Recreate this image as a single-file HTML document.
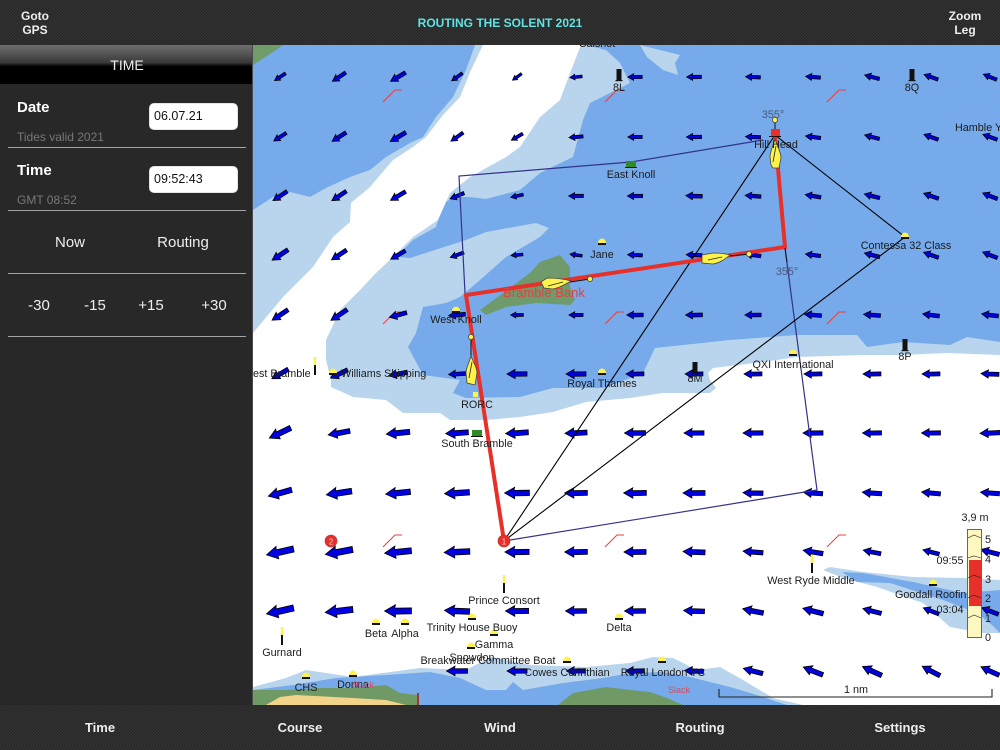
<!DOCTYPE html>
<html><head><meta charset="utf-8"><title>Routing the Solent 2021</title>
<style>
html,body{margin:0;padding:0;background:#262626}
body{width:1000px;height:750px;position:relative;overflow:hidden;font-family:"Liberation Sans",sans-serif;color:#fff}
.bar{position:absolute;left:0;width:1000px;background-color:#2c2c2c;background-image:conic-gradient(#272727 25%,#333 0 50%,#272727 0 75%,#333 0);background-size:3px 3px}
.t{position:absolute;white-space:nowrap;transform:translateX(-50%);text-align:center}
.b{font-weight:bold;font-size:12px;line-height:14px;color:#eee}
.n{font-weight:bold;font-size:13px;line-height:15px;color:#eee;top:720px}
.l{position:absolute;white-space:nowrap}
.hr{position:absolute;left:8px;width:238px;height:1px;background:#a5a5a5}
.inp{position:absolute;left:149px;width:89px;height:27px;background:#fff;border-radius:5px;box-shadow:inset 0 0 1px #555;color:#111;font-size:12.5px;line-height:27px;text-indent:5px}
.big{font-size:15px;line-height:18px;color:#eee}
svg{position:absolute;left:243px;top:35px;filter:blur(.3px)}
svg text{font-family:"Liberation Sans",sans-serif;font-size:10.8px;fill:#1c1c1c}
.m{text-anchor:middle}
</style></head><body>

<svg width="767" height="680" viewBox="243 35 767 680">
<defs>
<path id="a" d="M-10.5 0L-2 -4.8L-2.6 -2.2L10.5 -2.4L10.5 2.2L-2 2.4L-2 4.8Z" fill="#0000e0" stroke="#000" stroke-width=".8" vector-effect="non-scaling-stroke"/>
<g id="d"><path d="M-4 0A4 4.5 0 0 1 4 0Z" fill="#fdf34a"/><rect x="-4" y="0" width="8" height="2" fill="#111"/></g>
<g id="k"><rect x="-2.5" y="-7" width="5" height="11" fill="#111"/><rect x="-3.5" y="4" width="7" height="1.2" fill="#111"/></g>
<path id="w" d="M0 0L12 -12L19 -12" fill="none" stroke="#e8403c" stroke-width="1"/>
<g id="p"><rect x="-1.2" y="-10" width="2.4" height="8" fill="#fdf34a"/><rect x="-1" y="-2" width="2" height="10" fill="#111"/></g>
</defs>
<rect x="243" y="35" width="767" height="680" fill="#76aaea"/>
<path fill="#b9d5ee" d="M479 35L475 45L466 70L453 97L436 117L423 137L410 143L386 157L370 170L350 177L326 188L310 197L290 192L273 197L253 210L243 216L243 430L1010 430L1010 343L1000 342L967 337L950 345L903 342L867 347L857 335L797 335L730 340L655 348L643 373L633 377L603 388L553 388L520 397L466 398L453 393L460 380L423 375L408 347L416 333L423 307L446 303L460 297L480 280L506 257L540 237L549 228L536 223L486 232L466 240L410 258L396 257L413 240L436 227L443 203L456 197L470 197L486 199L520 190L540 173L573 157L583 120L590 103L630 83L620 63L606 50L586 45L575 35Z"/>
<path fill="#b9d5ee" d="M636 35L640 45L680 55L675 63L678 75L663 70L647 57L640 45L680 35Z"/>
<path fill="#fff" d="M488 35L483 45L471 70L460 97L443 115L426 137L413 147L393 160L370 187L351 203L350 222L333 237L313 267L283 297L253 333L243 345L243 715L1010 715L1010 355L1000 355L947 353L903 355L863 355L797 357L763 362L713 368L708 373L710 380L716 388L710 393L663 393L630 398L586 402L553 412L520 417L486 420L450 420L440 413L403 413L386 400L353 397L331 387L331 380L326 360L326 340L340 310L360 290L376 273L393 257L413 237L438 220L450 193L470 177L506 157L520 147L540 117L560 100L570 73L581 45L585 35Z"/>
<path fill="#6f9c68" d="M243 70L253 65L273 52L283 45L295 35L243 35Z"/>
<path fill="#6e9a6c" d="M480 310L503 293L530 273L540 262L560 255L570 267L570 287L575 300L570 305L536 303L506 307L486 315Z"/>
<path fill="#b9d5ee" d="M823 570L830 567L863 572L913 577L963 578L1000 580L1010 580L1010 636L1000 633L983 633L950 627L923 603L877 587L843 578Z"/>
<path fill="#76aaea" d="M842 572L863 573L913 582L963 593L1000 590L1010 590L1010 640L1000 633L992 625L977 613L943 600L890 583L857 582Z"/>
<path fill="#b9d5ee" d="M243 690L253 687L286 678L306 670L353 677L420 668L466 670L491 657L530 665L586 667L630 663L653 657L673 658L697 670L720 667L743 680L773 698L803 705L830 715L243 715Z"/>
<path fill="#76aaea" d="M243 692L253 690L293 685L336 678L386 675L430 672L460 678L486 690L506 690L513 682L523 690L563 683L603 678L630 673L663 672L690 677L730 687L757 695L787 705L810 715L243 715Z"/>
<path fill="#6f9a66" d="M243 690L286 690L320 688L353 688L386 685L400 693L418 695L418 715L243 715Z"/>
<path fill="#6f9a66" d="M550 715L558 705L573 693L606 687L630 690L650 692L667 698L683 705L700 715Z"/>
<path fill="#f2d38a" d="M255 715L266 705L280 697L296 695L353 698L386 700L406 705L415 715Z"/>

<text x="597" y="47" class="m">Calshot</text>

<use href="#w" x="383" y="102"/><use href="#w" x="605" y="102"/><use href="#w" x="827" y="102"/>
<use href="#w" x="383" y="324"/><use href="#w" x="605" y="324"/><use href="#w" x="827" y="324"/>
<use href="#w" x="383" y="547"/><use href="#w" x="605" y="547"/><use href="#w" x="827" y="547"/>

<g>
<use href="#a" transform="translate(280 77) rotate(-33) scale(.62)"/><use href="#a" transform="translate(339 77) rotate(-33) scale(.75)"/><use href="#a" transform="translate(398 77) rotate(-30) scale(.82)"/><use href="#a" transform="translate(457 77) rotate(-35) scale(.62)"/><use href="#a" transform="translate(517 77) rotate(-35) scale(.52)"/><use href="#a" transform="translate(576 77) rotate(-5) scale(.58)"/><use href="#a" transform="translate(635 77) scale(.68)"/><use href="#a" transform="translate(694 77) scale(.7)"/><use href="#a" transform="translate(753 77) rotate(3) scale(.7)"/><use href="#a" transform="translate(813 77) rotate(5) scale(.7)"/><use href="#a" transform="translate(872 77) rotate(15) scale(.72)"/><use href="#a" transform="translate(931 77) rotate(20) scale(.7)"/><use href="#a" transform="translate(990 77) rotate(22) scale(.68)"/>
<use href="#a" transform="translate(280 137) rotate(-32) scale(.7)"/><use href="#a" transform="translate(339 137) rotate(-32) scale(.78)"/><use href="#a" transform="translate(398 137) rotate(-30) scale(.85)"/><use href="#a" transform="translate(457 137) rotate(-35) scale(.7)"/><use href="#a" transform="translate(517 137) rotate(-30) scale(.62)"/><use href="#a" transform="translate(576 137) rotate(-5) scale(.67)"/><use href="#a" transform="translate(635 137) scale(.68)"/><use href="#a" transform="translate(694 137) scale(.72)"/><use href="#a" transform="translate(753 137) rotate(3) scale(.72)"/><use href="#a" transform="translate(813 137) rotate(8) scale(.72)"/><use href="#a" transform="translate(872 137) rotate(15) scale(.72)"/><use href="#a" transform="translate(931 137) rotate(20) scale(.72)"/><use href="#a" transform="translate(990 137) rotate(20) scale(.72)"/>
<use href="#a" transform="translate(280 196) rotate(-33) scale(.8)"/><use href="#a" transform="translate(339 196) rotate(-33) scale(.82)"/><use href="#a" transform="translate(398 196) rotate(-30) scale(.82)"/><use href="#a" transform="translate(457 196) rotate(-22) scale(.72)"/><use href="#a" transform="translate(517 196) rotate(-12) scale(.6)"/><use href="#a" transform="translate(576 196) scale(.7)"/><use href="#a" transform="translate(635 196) scale(.72)"/><use href="#a" transform="translate(694 196) rotate(3) scale(.78)"/><use href="#a" transform="translate(753 196) rotate(5) scale(.75)"/><use href="#a" transform="translate(813 196) rotate(10) scale(.75)"/><use href="#a" transform="translate(872 196) rotate(15) scale(.75)"/><use href="#a" transform="translate(931 196) rotate(20) scale(.75)"/><use href="#a" transform="translate(990 196) rotate(22) scale(.75)"/>
<use href="#a" transform="translate(280 255) rotate(-33) scale(.9)"/><use href="#a" transform="translate(339 255) rotate(-33) scale(.85)"/><use href="#a" transform="translate(398 255) rotate(-30) scale(.8)"/><use href="#a" transform="translate(457 255) rotate(-20) scale(.68)"/><use href="#a" transform="translate(517 255) rotate(-5) scale(.56)"/><use href="#a" transform="translate(576 255) rotate(8) scale(.58)"/><use href="#a" transform="translate(635 255) rotate(3) scale(.7)"/><use href="#a" transform="translate(694 255) rotate(3) scale(.75)"/><use href="#a" transform="translate(753 255) rotate(8) scale(.75)"/><use href="#a" transform="translate(813 255) rotate(8) scale(.72)"/><use href="#a" transform="translate(872 255) rotate(15) scale(.75)"/><use href="#a" transform="translate(931 255) rotate(20) scale(.75)"/><use href="#a" transform="translate(990 255) rotate(22) scale(.75)"/>
<use href="#a" transform="translate(280 315) rotate(-33) scale(.9)"/><use href="#a" transform="translate(339 315) rotate(-33) scale(.92)"/><use href="#a" transform="translate(398 315) rotate(-15) scale(.85)"/><use href="#a" transform="translate(457 315) rotate(-5) scale(.8)"/><use href="#a" transform="translate(517 315) scale(.6)"/><use href="#a" transform="translate(576 315) scale(.67)"/><use href="#a" transform="translate(635 315) scale(.78)"/><use href="#a" transform="translate(694 315) scale(.8)"/><use href="#a" transform="translate(753 315) scale(.77)"/><use href="#a" transform="translate(813 315) rotate(5) scale(.8)"/><use href="#a" transform="translate(872 315) rotate(5) scale(.8)"/><use href="#a" transform="translate(931 315) rotate(8) scale(.8)"/><use href="#a" transform="translate(990 315) rotate(8) scale(.8)"/>
<use href="#a" transform="translate(280 374) rotate(-30) scale(.9)"/><use href="#a" transform="translate(339 374) rotate(-25) scale(.9)"/><use href="#a" transform="translate(398 374) rotate(-10) scale(.9)"/><use href="#a" transform="translate(457 374) rotate(-3) scale(.8)"/><use href="#a" transform="translate(517 374) scale(.95)"/><use href="#a" transform="translate(576 374) scale(.95)"/><use href="#a" transform="translate(635 374) scale(.85)"/><use href="#a" transform="translate(694 374) scale(.85)"/><use href="#a" transform="translate(753 374) scale(.85)"/><use href="#a" transform="translate(813 374) scale(.85)"/><use href="#a" transform="translate(872 374) scale(.85)"/><use href="#a" transform="translate(931 374) scale(.85)"/><use href="#a" transform="translate(990 374) rotate(3) scale(.85)"/>
<use href="#a" transform="translate(280 433) rotate(-25) scale(1.12)"/><use href="#a" transform="translate(339 433) rotate(-10) scale(1.05)"/><use href="#a" transform="translate(398 433) rotate(-5) scale(1.12)"/><use href="#a" transform="translate(457 433) rotate(-3) scale(1.08)"/><use href="#a" transform="translate(517 433) rotate(-3) scale(1.08)"/><use href="#a" transform="translate(576 433) rotate(-2) scale(1.05)"/><use href="#a" transform="translate(635 433) scale(1)"/><use href="#a" transform="translate(694 433) scale(.95)"/><use href="#a" transform="translate(753 433) scale(.95)"/><use href="#a" transform="translate(813 433) scale(.95)"/><use href="#a" transform="translate(872 433) scale(.9)"/><use href="#a" transform="translate(931 433) scale(.9)"/><use href="#a" transform="translate(990 433) rotate(-2) scale(.95)"/>
<use href="#a" transform="translate(280 493) rotate(-15) scale(1.15)"/><use href="#a" transform="translate(339 493) rotate(-8) scale(1.22)"/><use href="#a" transform="translate(398 493) rotate(-5) scale(1.18)"/><use href="#a" transform="translate(457 493) rotate(-3) scale(1.18)"/><use href="#a" transform="translate(517 493) scale(1.18)"/><use href="#a" transform="translate(576 493) scale(1.08)"/><use href="#a" transform="translate(635 493) scale(1.08)"/><use href="#a" transform="translate(694 493) scale(1.05)"/><use href="#a" transform="translate(753 493) rotate(2) scale(.95)"/><use href="#a" transform="translate(813 493) rotate(5) scale(.92)"/><use href="#a" transform="translate(872 493) rotate(5) scale(.92)"/><use href="#a" transform="translate(931 493) rotate(6) scale(.9)"/><use href="#a" transform="translate(990 493) rotate(5) scale(.9)"/>
<use href="#a" transform="translate(280 552) rotate(-12) scale(1.32)"/><use href="#a" transform="translate(339 552) rotate(-10) scale(1.32)"/><use href="#a" transform="translate(398 552) rotate(-5) scale(1.28)"/><use href="#a" transform="translate(457 552) rotate(-2) scale(1.22)"/><use href="#a" transform="translate(517 552) scale(1.15)"/><use href="#a" transform="translate(576 552) scale(1.08)"/><use href="#a" transform="translate(635 552) scale(1.05)"/><use href="#a" transform="translate(694 552) rotate(3) scale(1.05)"/><use href="#a" transform="translate(753 552) rotate(5) scale(.95)"/><use href="#a" transform="translate(813 552) rotate(10) scale(.95)"/><use href="#a" transform="translate(872 552) rotate(12) scale(.85)"/><use href="#a" transform="translate(931 552) rotate(15) scale(.8)"/><use href="#a" transform="translate(990 552) rotate(15) scale(.9)"/>
<use href="#a" transform="translate(280 611) rotate(-12) scale(1.32)"/><use href="#a" transform="translate(339 611) rotate(-6) scale(1.32)"/><use href="#a" transform="translate(398 611) scale(1.28)"/><use href="#a" transform="translate(457 611) rotate(3) scale(1.2)"/><use href="#a" transform="translate(517 611) scale(1.1)"/><use href="#a" transform="translate(576 611) scale(1)"/><use href="#a" transform="translate(635 611) scale(1)"/><use href="#a" transform="translate(694 611) rotate(3) scale(1)"/><use href="#a" transform="translate(753 611) rotate(12) scale(1)"/><use href="#a" transform="translate(813 611) rotate(15) scale(1)"/><use href="#a" transform="translate(872 611) rotate(15) scale(.9)"/><use href="#a" transform="translate(931 611) rotate(22) scale(.8)"/><use href="#a" transform="translate(990 611) rotate(22) scale(.85)"/>
<use href="#a" transform="translate(457 671) scale(1)"/><use href="#a" transform="translate(517 671) scale(.95)"/><use href="#a" transform="translate(576 671) scale(.9)"/><use href="#a" transform="translate(635 671) scale(.9)"/><use href="#a" transform="translate(694 671) rotate(3) scale(.9)"/><use href="#a" transform="translate(753 671) rotate(15) scale(.95)"/><use href="#a" transform="translate(813 671) rotate(22) scale(1)"/><use href="#a" transform="translate(872 671) rotate(25) scale(1)"/><use href="#a" transform="translate(931 671) rotate(28) scale(.95)"/><use href="#a" transform="translate(990 671) rotate(25) scale(.95)"/>
</g>

<path d="M763 140L631 162L459 176L465 293M785 248L817 490L504 541" fill="none" stroke="#33338a" stroke-width="1.2"/>
<path d="M504 541L775 135L905 237L504 541" fill="none" stroke="#000" stroke-width="1.1"/>
<path d="M504 541L466 295L785 247L775 135" fill="none" stroke="#e8302a" stroke-width="4" stroke-linejoin="miter"/>
<path d="M775 120V135M730 256L749 254M570 282L590 279M471 337L471 360M785 248L787 262" stroke="#111" stroke-width="1" fill="none"/>

<use href="#d" x="602" y="243"/><use href="#d" x="456" y="311"/><use href="#d" x="333" y="373"/><use href="#d" x="602" y="373"/><use href="#d" x="793" y="354"/><use href="#d" x="905" y="237"/><use href="#d" x="376" y="623"/><use href="#d" x="405" y="623"/><use href="#d" x="472" y="618"/><use href="#d" x="494" y="634"/><use href="#d" x="471" y="647"/><use href="#d" x="619" y="618"/><use href="#d" x="567" y="661"/><use href="#d" x="662" y="661"/><use href="#d" x="306" y="677"/><use href="#d" x="353" y="675"/><use href="#d" x="933" y="584"/>
<use href="#k" x="619" y="76"/><use href="#k" x="912" y="76"/><use href="#k" x="905" y="346"/><use href="#k" x="695" y="369"/>
<rect x="626" y="161" width="10" height="7" fill="#2f8a2a"/><rect x="625" y="167" width="12" height="1" fill="#111"/>
<rect x="472" y="430" width="10" height="7" fill="#2f8a2a"/><rect x="471" y="436" width="12" height="1" fill="#111"/>
<rect x="771" y="129" width="9" height="7" fill="#e8302a"/><rect x="769" y="136" width="12" height="1" fill="#111"/>
<rect x="473" y="392" width="5" height="5" fill="#fdf34a"/>
<use href="#p" x="504" y="585"/><use href="#p" x="282" y="637"/><use href="#p" x="315" y="367"/><use href="#p" x="812" y="565"/>
<rect x="417" y="693" width="2" height="12" fill="#a33"/>

<g fill="#fdf34a" stroke="#444" stroke-width=".8">
<path d="M775 139C773 146 770 152 770 157L771 165L773 168L779 168L781 158C781 152 777 146 775 139Z"/>
<path d="M730 255C724 253 718 253 713 253L702 255L702 263L713 264C720 263 725 259 730 255Z"/>
<path d="M571 281C564 279 556 278 547 278L541 282L544 288L553 289C559 288 566 284 571 281Z"/>
<path d="M471 356C469 363 466 368 466 373L467 383L475 385L477 373C477 367 473 362 471 356Z"/>
<circle cx="775" cy="120" r="2.6"/><circle cx="749" cy="254" r="2.6"/><circle cx="590" cy="279" r="2.6"/><circle cx="471" cy="337" r="2.6"/>
</g>
<path d="M776 146L773 162M708 260L722 257M548 286L563 282M472 362L469 378" stroke="#222" stroke-width=".8"/>

<circle cx="504" cy="541" r="6" fill="#e8302a" stroke="#a33" stroke-width=".6"/><circle cx="331" cy="541" r="6" fill="#e8302a" stroke="#a33" stroke-width=".6"/>
<text x="504" y="544.5" class="m" style="font-size:8px;fill:#fcc">1</text><text x="331" y="544.5" class="m" style="font-size:8px;fill:#fcc">2</text>

<text x="619" y="91" class="m">8L</text><text x="912" y="91" class="m">8Q</text>
<text x="955" y="131">Hamble Yacht</text><text x="631" y="178" class="m">East Knoll</text>
<text x="776" y="148" class="m">Hill Head</text>
<text x="773" y="118" class="m" style="fill:#4a5a7a">355°</text><text x="787" y="275" class="m" style="fill:#4a5a7a">355°</text>
<text x="906" y="249" class="m">Contessa 32 Class</text><text x="602" y="258" class="m">Jane</text>
<text x="456" y="323" class="m">West Knoll</text>
<text x="544" y="297" class="m" style="font-size:13px;fill:#dc4444">Bramble Bank</text>
<text x="253" y="377">est Bramble</text><text x="341" y="377">Williams Shipping</text>
<text x="602" y="387" class="m">Royal Thames</text><text x="793" y="368" class="m">QXI International</text>
<text x="695" y="382" class="m">8M</text><text x="905" y="360" class="m">8P</text>
<text x="477" y="408" class="m">RORC</text><text x="477" y="447" class="m">South Bramble</text>
<text x="504" y="604" class="m">Prince Consort</text><text x="376" y="637" class="m">Beta</text><text x="405" y="637" class="m">Alpha</text>
<text x="472" y="631" class="m">Trinity House Buoy</text><text x="494" y="648" class="m">Gamma</text><text x="619" y="631" class="m">Delta</text>
<text x="282" y="656" class="m">Gurnard</text><text x="472" y="661" class="m">Snowdon</text>
<text x="488" y="664" class="m">Breakwater Committee Boat</text><text x="567" y="676" class="m">Cowes Corinthian</text>
<text x="663" y="676" class="m">Royal London YC</text><text x="306" y="691" class="m">CHS</text><text x="353" y="688" class="m">Donna</text>
<text x="363" y="688" class="m" style="font-size:9px;fill:#d84a6a">Slack</text>
<text x="679" y="693" class="m" style="font-size:9px;fill:#d84a5a">Slack</text>
<text x="811" y="584" class="m">West Ryde Middle</text>
<text x="895" y="598">Goodall Roofin</text>

<path d="M719 689V697H992V689" fill="none" stroke="#222" stroke-width="1.1"/>
<text x="856" y="693" class="m">1 nm</text>

<rect x="967.5" y="529.5" width="14" height="108" fill="#fdf8c0" stroke="#666"/>
<rect x="969" y="560" width="12" height="46" fill="#e8302a"/>
<path d="M968 538L974 535L981 538M968 558L974 556L981 558M968 578L974 575L981 578M968 598L974 595L981 598M968 618L974 615L981 618" fill="none" stroke="#222" stroke-width=".6"/>
<g style="font-size:10.5px"><text x="985" y="543">5</text><text x="985" y="563">4</text><text x="985" y="583">3</text><text x="985" y="602">2</text><text x="985" y="622">1</text><text x="985" y="641">0</text></g>
<text x="950" y="564" class="m">09:55</text><text x="950" y="613" class="m">03:04</text><text x="975" y="521" class="m">3,9 m</text>
</svg>

<div class="bar" style="top:0;height:45px"></div>
<div class="t b" style="left:35px;top:9px">Goto<br>GPS</div>
<div class="t b" style="left:500px;top:16px;color:#5fe3e3">ROUTING THE SOLENT 2021</div>
<div class="t b" style="left:965px;top:9px">Zoom<br>Leg</div>

<div style="position:absolute;left:0;top:45px;width:252px;height:660px;background:#282828;border-right:1px solid #4a4a4a"></div>
<div style="position:absolute;left:0;top:45px;width:252px;height:39px;background:linear-gradient(#6e6e6e 0,#3a3a3a 45%,#000 55%,#000 100%)"></div>
<div class="t" style="left:127px;top:57px;font-size:14px;line-height:17px;color:#eee">TIME</div>
<div class="l" style="left:17px;top:99px;font-size:15px;line-height:18px;font-weight:bold">Date</div>
<div class="l" style="left:17px;top:130px;font-size:12px;line-height:14px;color:#777">Tides valid 2021</div>
<div class="inp" style="top:103px">06.07.21</div>
<div class="hr" style="top:147px"></div>
<div class="l" style="left:17px;top:162px;font-size:15px;line-height:18px;font-weight:bold">Time</div>
<div class="l" style="left:17px;top:193px;font-size:12px;line-height:14px;color:#777">GMT 08:52</div>
<div class="inp" style="top:166px">09:52:43</div>
<div class="hr" style="top:210px"></div>
<div class="t big" style="left:70px;top:234px">Now</div>
<div class="t big" style="left:183px;top:234px">Routing</div>
<div class="hr" style="top:273px"></div>
<div class="t big" style="left:39px;top:297px">-30</div>
<div class="t big" style="left:95px;top:297px">-15</div>
<div class="t big" style="left:151px;top:297px">+15</div>
<div class="t big" style="left:214px;top:297px">+30</div>
<div class="hr" style="top:336px"></div>

<div class="bar" style="top:705px;height:45px"></div>
<div class="t n" style="left:100px">Time</div>
<div class="t n" style="left:300px">Course</div>
<div class="t n" style="left:500px">Wind</div>
<div class="t n" style="left:700px">Routing</div>
<div class="t n" style="left:900px">Settings</div>
</body></html>
